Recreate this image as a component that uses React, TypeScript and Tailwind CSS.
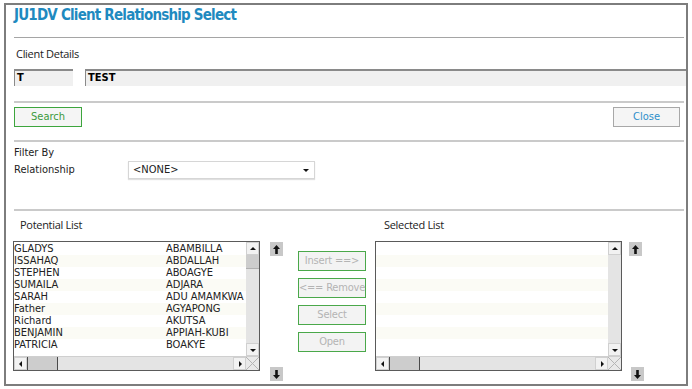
import React from "react";

const potential = [
  ["GLADYS", "ABAMBILLA"],
  ["ISSAHAQ", "ABDALLAH"],
  ["STEPHEN", "ABOAGYE"],
  ["SUMAILA", "ADJARA"],
  ["SARAH", "ADU AMAMKWA"],
  ["Father", "AGYAPONG"],
  ["Richard", "AKUTSA"],
  ["BENJAMIN", "APPIAH-KUBI"],
  ["PATRICIA", "BOAKYE"],
];

const Tri = ({ dir }: { dir: "up" | "down" | "left" | "right" }) => {
  const pts = {
    up: "1,5 4,2 7,5",
    down: "1,3 4,6 7,3",
    left: "5,1 2,4 5,7",
    right: "3,1 6,4 3,7",
  }[dir];
  return (
    <svg width="8" height="8" viewBox="0 0 8 8">
      <polygon points={pts} fill="#111" />
    </svg>
  );
};

const MoveBtn = ({ down }: { down?: boolean }) => (
  <div className="w-[13px] h-[14px] bg-[#c8c8c8] flex items-center justify-center">
    <svg width="7" height="9" viewBox="0 0 7 9" className={down ? "rotate-180" : ""}>
      <path d="M3.5 0 L7 4 H4.8 V9 H2.2 V4 H0 Z" fill="#111" />
    </svg>
  </div>
);

const ScrollBtn = ({ dir }: { dir: "up" | "down" | "left" | "right" }) => (
  <div className="w-[13px] h-[13px] shrink-0 bg-[#f2f2f2] border border-[#d0d0d0] flex items-center justify-center">
    <Tri dir={dir} />
  </div>
);

const ListBox = ({ rows, thumb }: { rows: string[][]; thumb?: boolean }) => (
  <div className="w-[247px] h-[130px] border border-[#5a5a5a] flex flex-col bg-white">
    <div className="flex flex-1 min-h-0">
      <div className="flex-1 overflow-hidden pt-[1px]">
        {Array.from({ length: 9 }).map((_, i) => (
          <div
            key={i}
            className={`h-[12px] flex items-center text-[11px] leading-[12px] text-[#222] whitespace-nowrap ${
              i % 2 === 1 ? "bg-[#fbfbf5]" : "bg-white"
            }`}
          >
            <span className="w-[152px]">{rows[i]?.[0] ?? ""}</span>
            <span>{rows[i]?.[1] ?? ""}</span>
          </div>
        ))}
      </div>
      <div className="w-[13px] flex flex-col bg-[#e4e4e4]">
        <ScrollBtn dir="up" />
        {thumb ? <div className="h-[14px] bg-[#cdcdcd] border-b border-[#b0b0b0]" /> : null}
        <div className="flex-1" />
        <ScrollBtn dir="down" />
      </div>
    </div>
    <div className="h-[14px] flex border-t border-[#cfcfcf] bg-[#e4e4e4]">
      <ScrollBtn dir="left" />
      <div className="w-[31px] bg-[#cdcdcd] border-l border-r border-[#4a4a4a]" />
      <div className="flex-1" />
      <ScrollBtn dir="right" />
      <div className="w-[13px] bg-[#e9e9e9]">
        <svg width="13" height="13" viewBox="0 0 13 13">
          <path d="M0 0 L13 13 M13 0 L0 13" stroke="#b5b5b5" strokeWidth="1" />
        </svg>
      </div>
    </div>
  </div>
);

const ActionBtn = ({ label }: { label: string }) => (
  <div className="w-[68px] h-[20px] border border-[#4aa84a] bg-[#f3f3f3] flex items-center justify-center text-[11px] tracking-[-0.2px] whitespace-nowrap text-[#b4b4b4]">
    {label}
  </div>
);

export default function App() {
  return (
    <div className="w-[692px] h-[389px] bg-white pt-[3px] pl-[4px] font-['DejaVu_Sans_Condensed','Liberation_Sans',sans-serif]">
      <div className="w-[684px] h-[383px] border-2 border-[#7d7d7d] pl-[8px] pr-[2px] flex flex-col">
        <div className="h-[20px] leading-[20px] text-[15px] tracking-[-0.8px] font-bold text-[#1f8ac0]">
          JU1DV Client Relationship Select
        </div>
        <div className="mt-[12px] h-px bg-[#a5a5a5]" />

        <div className="mt-[8px] h-[16px] leading-[16px] text-[11px] text-[#222] pl-[2px] font-['Open_Sans',sans-serif] tracking-[-0.3px]">
          Client Details
        </div>
        <div className="mt-[7px] flex h-[17px] text-[11px] font-bold text-black">
          <div className="w-[59px] bg-[#f0f0f0] border-t-2 border-l border-[#8a8a8a] pl-[2px] leading-[14px]">T</div>
          <div className="ml-[12px] flex-1 mr-[-2px] bg-[#f0f0f0] border-t-2 border-l border-[#8a8a8a] pl-[2px] leading-[14px]">
            TEST
          </div>
        </div>

        <div className="mt-[15px] h-[2px] bg-[#cacaca]" />
        <div className="mt-[4px] flex justify-between h-[20px] text-[11px]">
          <div className="w-[68px] border border-[#3da53d] bg-[#f5f5f5] text-[#3c9a3c] flex items-center justify-center">
            Search
          </div>
          <div className="w-[67px] mr-[4px] border border-[#a8a8a8] bg-[#f5f5f5] text-[#2d8fca] flex items-center justify-center">
            Close
          </div>
        </div>

        <div className="mt-[13px] h-[2px] bg-[#cacaca]" />
        <div className="mt-[4px] h-[14px] leading-[14px] text-[11px] text-[#222]">Filter By</div>
        <div className="mt-[1px] flex items-center h-[18px] text-[11px] text-[#222]">
          <div className="w-[114px]">Relationship</div>
          <div className="w-[187px] h-[18px] border border-[#d6d6d6] shadow-[0_1px_1px_#e0e0e0] flex items-center justify-between pl-[4px] pr-[4px]">
            <span>&lt;NONE&gt;</span>
            <Tri dir="down" />
          </div>
        </div>

        <div className="mt-[30px] h-[2px] bg-[#cacaca]" />
        <div className="mt-[7px] flex h-[14px] leading-[14px] text-[11px] text-[#222] font-['Open_Sans',sans-serif] tracking-[-0.3px]">
          <div className="pl-[6px] w-[370px]">Potential List</div>
          <div>Selected List</div>
        </div>

        <div className="mt-[9px] flex items-start">
          <div className="ml-[-1px]">
            <ListBox rows={potential} thumb />
          </div>
          <div className="ml-[10px] h-[140px] pt-[1px] flex flex-col justify-between">
            <MoveBtn />
            <MoveBtn down />
          </div>
          <div className="ml-[15px] pt-[10px] flex flex-col gap-[7px]">
            <ActionBtn label="Insert ==>" />
            <ActionBtn label="<== Remove" />
            <ActionBtn label="Select" />
            <ActionBtn label="Open" />
          </div>
          <div className="ml-[9px]">
            <ListBox rows={[]} />
          </div>
          <div className="ml-[7px] h-[140px] pt-[1px] flex flex-col justify-between">
            <MoveBtn />
            <div className="ml-[2px]">
              <MoveBtn down />
            </div>
          </div>
        </div>
      </div>
    </div>
  );
}
